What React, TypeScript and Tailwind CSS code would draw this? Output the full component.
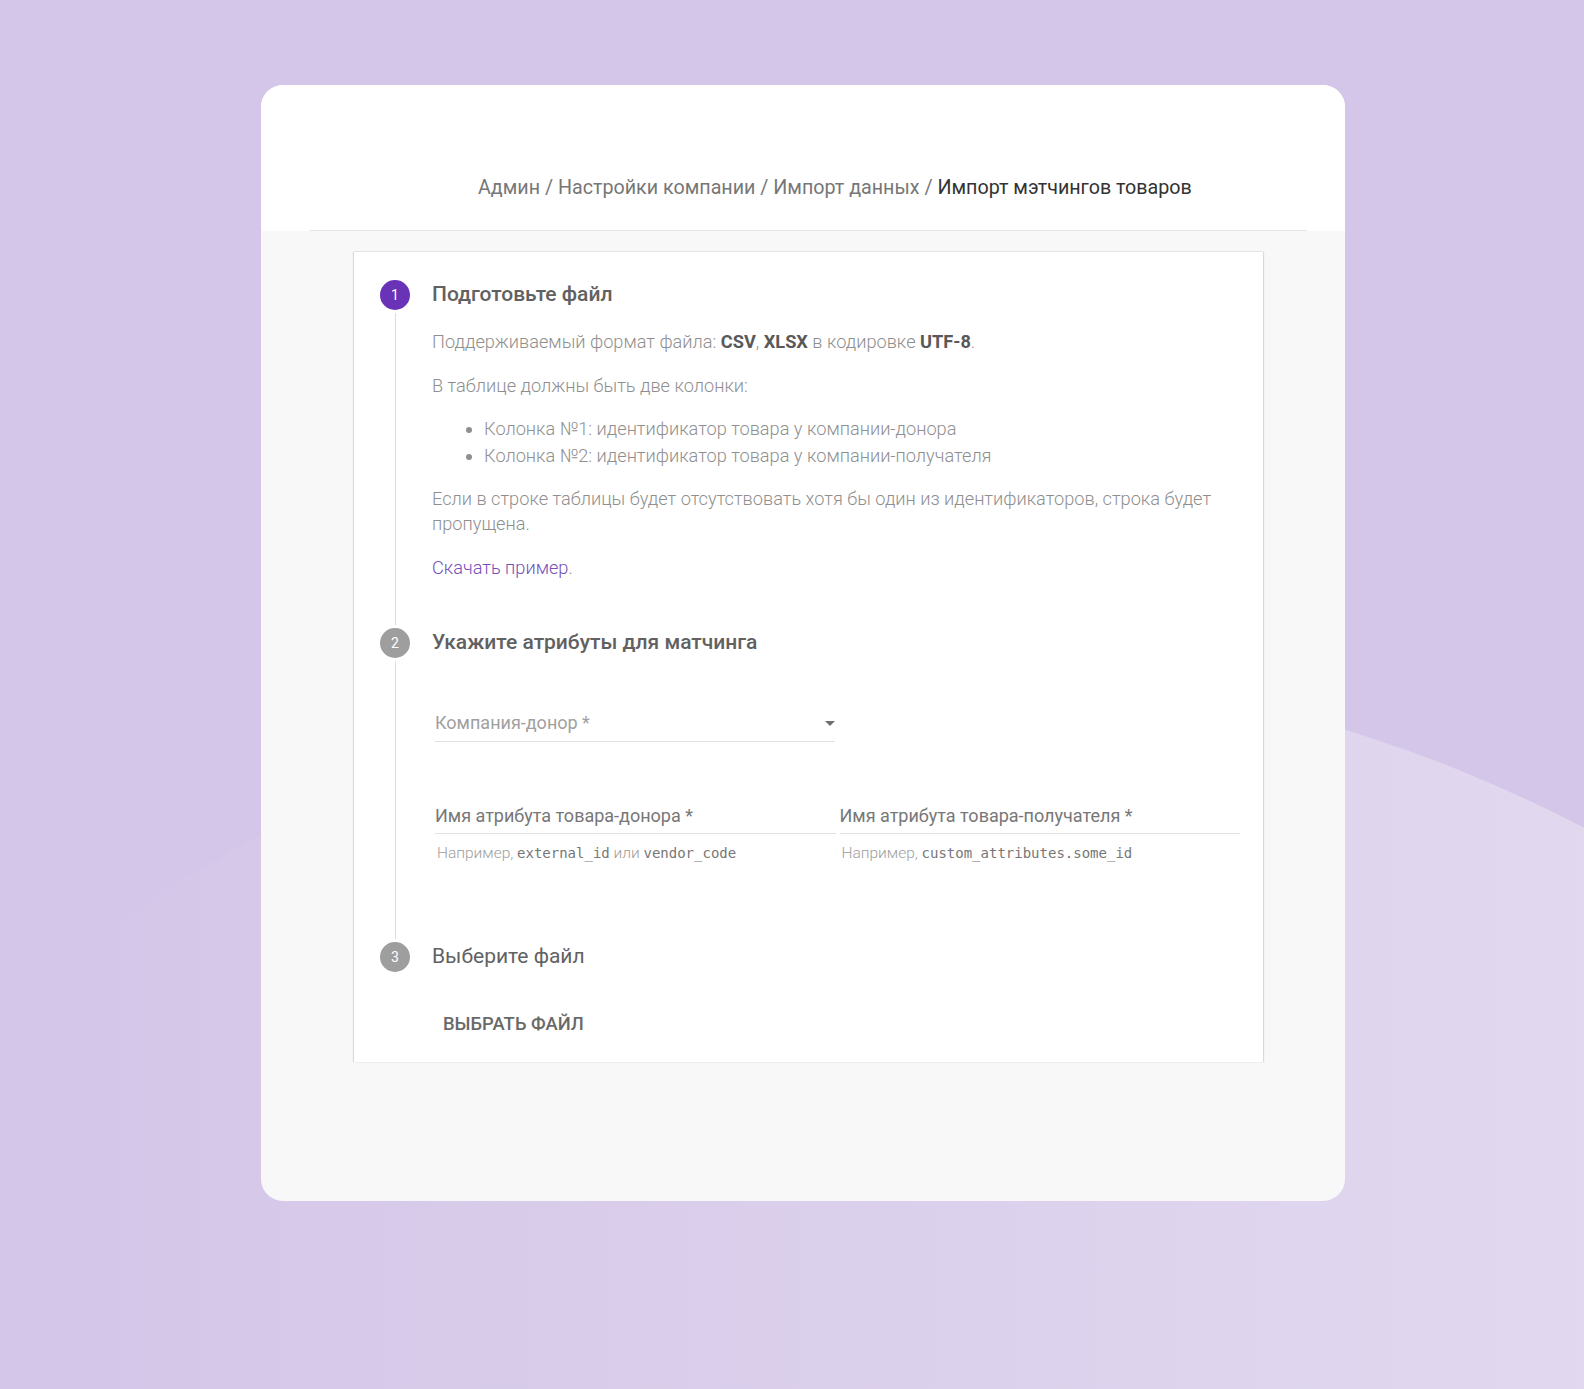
import React from 'react';

interface StepProps {
  num: number;
  title: string;
  active?: boolean;
  titleClass: string;
  bodyClass: string;
  last?: boolean;
  children: React.ReactNode;
}

function Step({ num, title, active, titleClass, bodyClass, last, children }: StepProps) {
  return (
    <div className="flex">
      <div className="flex w-[30px] shrink-0 flex-col items-center">
        <div
          className={`flex h-[30px] w-[30px] items-center justify-center rounded-full text-[14px] text-white ${
            active ? 'bg-[#6a32b6]' : 'bg-[#9e9e9e]'
          }`}
        >
          {num}
        </div>
        {!last && <div className="my-[3px] w-px flex-1 bg-[#dedede]" />}
      </div>
      <div className="ml-[22px] flex-1">
        <div className={`flex h-[30px] items-center text-[21px] ${titleClass}`}>{title}</div>
        <div className={bodyClass}>{children}</div>
      </div>
    </div>
  );
}

function AttrField({ label, hint }: { label: string; hint: React.ReactNode }) {
  return (
    <div>
      <div className="border-b border-[#e2e2e2] pb-[5px] text-[18px] leading-[25px] text-[#777]">{label}</div>
      <div className="mt-[9px] ml-[2px] text-[15.5px] leading-[20px] font-light text-[#9e9e9e]">{hint}</div>
    </div>
  );
}

const Mono = ({ children }: { children: React.ReactNode }) => (
  <span className="font-['DejaVu_Sans_Mono',monospace] text-[14px] text-[#777]">{children}</span>
);

export default function App() {
  return (
    <div className="relative h-[1389px] w-full overflow-hidden bg-[#d4c6e8] font-['Roboto',sans-serif]">
      {/* decorative light wave, bottom right */}
      <div className="absolute left-[-485px] top-[667px] h-[2828px] w-[2828px] rounded-full bg-linear-to-r from-[#d4c6e8] from-20% to-[#e8e2f3]" />

      <div className="relative pt-[85px]">
        <div className="ml-[261px] h-[1116px] w-[1084px] overflow-hidden rounded-[22px] bg-[#f8f8f8]">
          <div className="bg-white">
            <div className="ml-[49px] mr-[38px] border-b border-[#e3e3e3] pt-[89px] pb-[28px] pl-[168px] text-[19.7px] leading-[28px] text-[#777]">
              Админ / Настройки компании / Импорт данных / <span className="text-[#333]">Импорт мэтчингов товаров</span>
            </div>
          </div>

          <div className="pt-[21px]">
            <div className="ml-[93px] w-[909px] bg-white pt-[28px] pr-[23px] pb-[25px] pl-[26px] shadow-[1px_0_1px_rgba(0,0,0,0.12),-1px_0_1px_rgba(0,0,0,0.12),0_-1px_1px_rgba(0,0,0,0.04)]">
              <Step num={1} title="Подготовьте файл" active titleClass="font-medium text-[#616161]" bodyClass="pt-[19px] pb-[48px]">
                <div className="text-[18.2px] leading-[25px] font-light text-[#8f8f8f]">
                  <p>
                    Поддерживаемый формат файла: <b className="font-bold text-[#595959]">CSV</b>,{' '}
                    <b className="font-bold text-[#595959]">XLSX</b> в кодировке <b className="font-bold text-[#595959]">UTF-8</b>.
                  </p>
                  <p className="mt-[19px]">В таблице должны быть две колонки:</p>
                  <ul className="mt-[17px] list-disc pl-[52px] leading-[27px] marker:text-[#8f8f8f]">
                    <li>Колонка №1: идентификатор товара у компании-донора</li>
                    <li>Колонка №2: идентификатор товара у компании-получателя</li>
                  </ul>
                  <p className="mt-[17px] pr-[20px]">
                    Если в строке таблицы будет отсутствовать хотя бы один из идентификаторов, строка будет пропущена.
                  </p>
                  <p className="mt-[19px]">
                    <span className="text-[#7450b8]">Скачать пример</span>.
                  </p>
                </div>
              </Step>

              <Step num={2} title="Укажите атрибуты для матчинга" titleClass="font-medium text-[#616161]" bodyClass="pt-[52px] pb-[79px]">
                <div className="ml-[3px] flex w-[400px] items-center justify-between border-b border-[#e0e0e0] pb-[6px]">
                  <span className="text-[18px] leading-[25px] text-[#a0a0a0]">Компания-донор *</span>
                  <svg viewBox="0 0 24 24" className="mr-[-7px] h-[24px] w-[24px] fill-[#6e6e6e]">
                    <path d="M7 10l5 5 5-5z" />
                  </svg>
                </div>
                <div className="mt-[61px] ml-[3px] grid grid-cols-2 gap-x-[4px]">
                  <AttrField
                    label="Имя атрибута товара-донора *"
                    hint={
                      <>
                        Например, <Mono>external_id</Mono> или <Mono>vendor_code</Mono>
                      </>
                    }
                  />
                  <AttrField
                    label="Имя атрибута товара-получателя *"
                    hint={
                      <>
                        Например, <Mono>custom_attributes.some_id</Mono>
                      </>
                    }
                  />
                </div>
              </Step>

              <Step num={3} title="Выберите файл" last titleClass="text-[#626262]" bodyClass="pt-[40px]">
                <button className="ml-[11px] text-[18.4px] leading-[24px] font-medium text-[#696969]">ВЫБРАТЬ ФАЙЛ</button>
              </Step>
            </div>
          </div>
        </div>
      </div>
    </div>
  );
}
